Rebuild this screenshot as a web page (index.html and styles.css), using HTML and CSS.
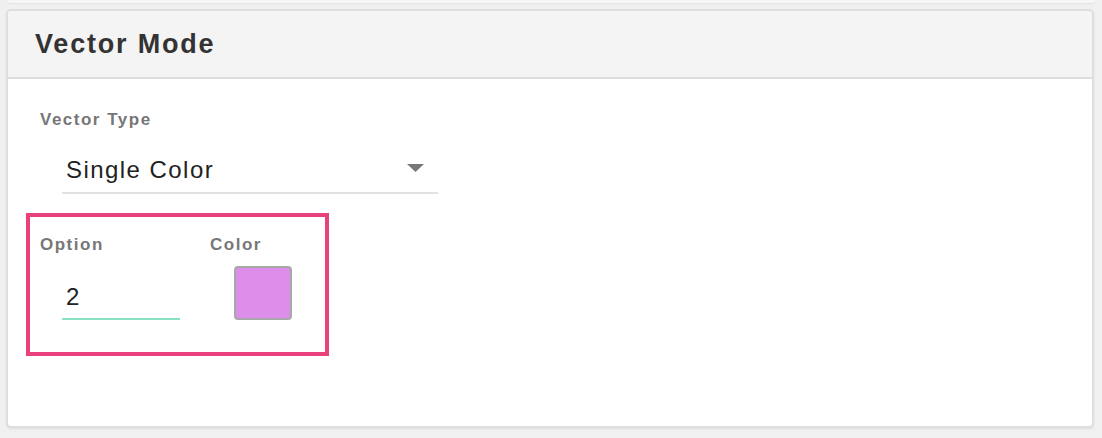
FILE: index.html
```html
<!DOCTYPE html>
<html>
<head>
<meta charset="utf-8">
<link rel="stylesheet" href="styles.css">
</head>
<body>
<div class="top-shadow"></div>
<section class="card">
  <header class="card-header">
    <h2 class="card-title">Vector Mode</h2>
  </header>
  <div class="card-body">
    <div class="field">
      <label class="field-label">Vector Type</label>
      <div class="select">
        <span class="select-value">Single Color</span>
        <svg class="select-arrow" width="17" height="8" viewBox="0 0 17 8"><path d="M0 0H17L8.5 8Z" fill="#777"/></svg>
      </div>
    </div>
    <div class="highlight">
      <div class="opt-col">
        <label class="field-label">Option</label>
        <div class="num-input"><span>2</span></div>
      </div>
      <div class="color-col">
        <label class="field-label">Color</label>
        <div class="swatch"></div>
      </div>
    </div>
  </div>
</section>
</body>
</html>
```
FILE: styles.css
```css
* { box-sizing: border-box; }
html, body { margin: 0; padding: 0; }
body {
  background: #f0f0f0;
  font-family: "Liberation Sans", Arial, sans-serif;
  width: 1102px;
  height: 438px;
  overflow: hidden;
}
.top-shadow {
  height: 3px;
  margin: 0 7px 6px 7px;
  background: #f6f6f6;
  box-shadow: 0 1px 2px rgba(0,0,0,0.06);
  border-radius: 0 0 4px 4px;
}
.card {
  margin-left: 6px;
  width: 1088px;
  height: 419px;
  background: #fff;
  border: 2px solid #dedede;
  border-radius: 5px;
  box-shadow: 0 1px 2px rgba(0,0,0,0.08);
  overflow: hidden;
}
.card-header {
  height: 68px;
  background: #f4f4f4;
  border-bottom: 2px solid #dedede;
  display: flex;
  align-items: center;
  padding-left: 27px;
}
.card-title {
  margin: 0;
  font-size: 27px;
  font-weight: bold;
  letter-spacing: 1.8px;
  color: #333;
}
.card-body {
  padding: 31px 0 0 32px;
  display: flex;
  flex-direction: column;
}
.field-label {
  display: block;
  font-size: 17px;
  font-weight: bold;
  color: #777;
  letter-spacing: 1.5px;
}
.select {
  margin: 18px 0 0 22px;
  width: 376px;
  height: 46px;
  border-bottom: 2px solid #e2e2e2;
  display: flex;
  align-items: center;
  justify-content: space-between;
  padding: 0 14px 0 4px;
}
.select-value {
  font-size: 24px;
  color: #222;
  letter-spacing: 1.45px;
}
.select-arrow { position: relative; top: -2px; }
.highlight {
  margin: 19px 0 0 -14px;
  width: 303px;
  height: 143px;
  border: 4px solid #e8417d;
  display: flex;
  padding: 18px 0 0 10px;
}
.opt-col { width: 170px; }
.num-input {
  margin: 20px 0 0 22px;
  width: 118px;
  height: 45px;
  border-bottom: 2px solid #8ae2c6;
  font-size: 24px;
  color: #222;
  padding-left: 4px;
  display: flex;
  align-items: center;
}
.swatch {
  margin: 11px 0 0 24px;
  width: 58px;
  height: 54px;
  background: #dd8dea;
  border: 2px solid #a8a8a8;
  border-radius: 4px;
}
```
